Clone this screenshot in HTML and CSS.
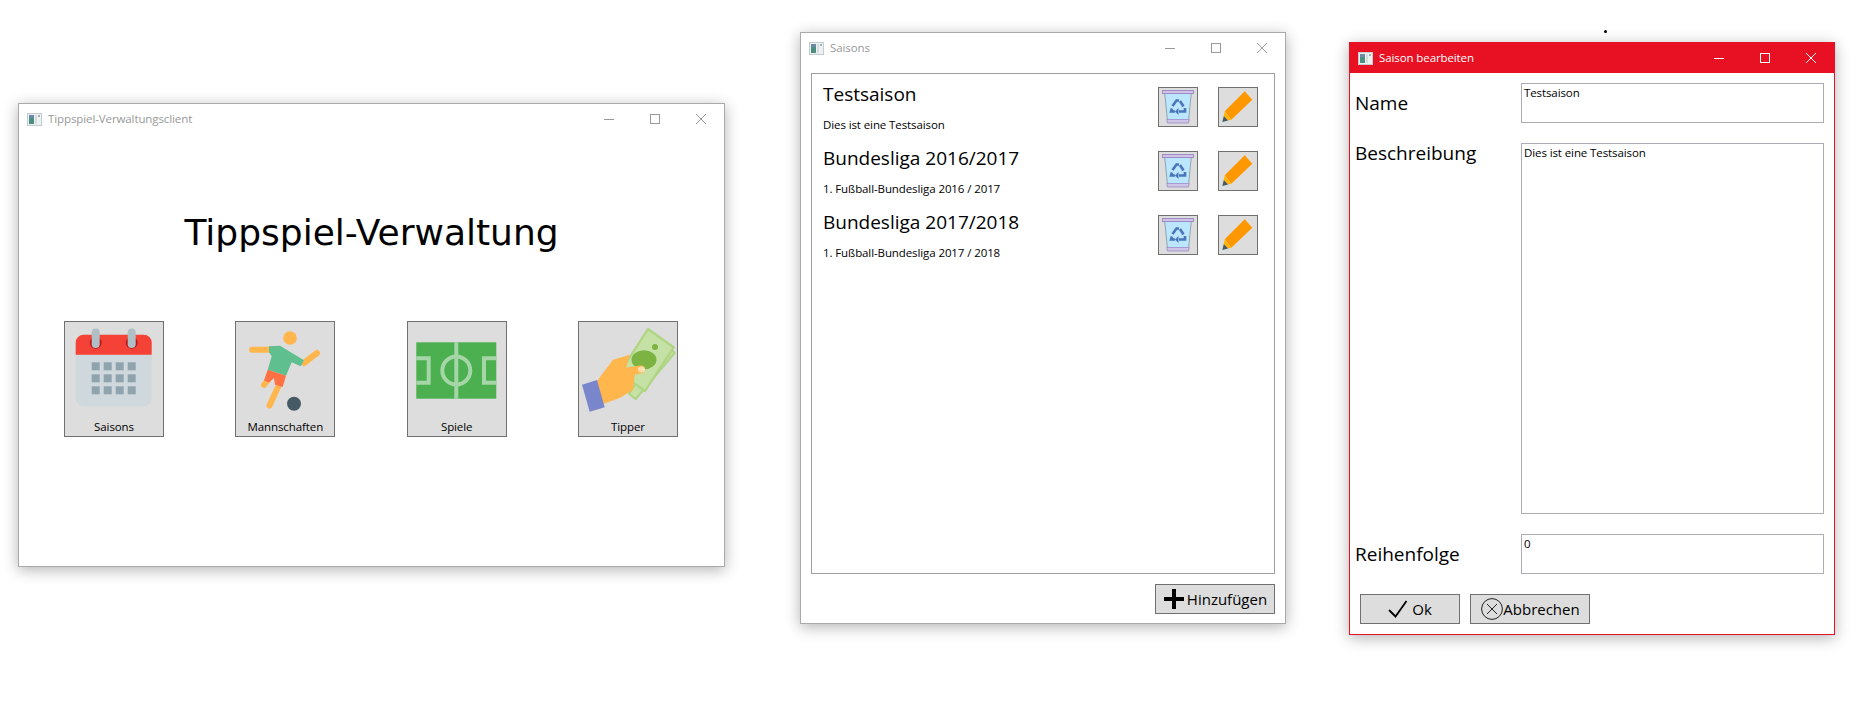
FILE: index.html
```html
<!DOCTYPE html>
<html>
<head>
    <title>Tippspiel-Verwaltung</title>
    <link rel="stylesheet" href="styles.css">
</head>
<body>
    <svg width="0" height="0" class="defs">
        <defs>
            <symbol id="app" viewBox="0 0 15 13">
                <rect x="0.5" y="0.5" width="14" height="12" fill="#eef1f2" stroke="#c3cbcf"/>
                <rect x="2" y="2" width="5" height="9" fill="#4a8f82"/>
                <rect x="2" y="2" width="5" height="3" fill="#6c8aa8"/>
                <rect x="8" y="2" width="2" height="9" fill="#d5dde0"/>
                <rect x="11" y="2" width="2" height="2" fill="#9fb0b8"/>
            </symbol>
            <symbol id="trash" viewBox="0 0 38 38">
                <path d="M5.7 5 L32.3 5 L29.5 33 L8.5 33 Z" fill="#bbe6fd" stroke="#90a4ae"/>
                <rect x="3.5" y="2.5" width="31" height="3" fill="#d1c4e9" stroke="#9f8ac4"/>
                <path d="M7.8 31.5 H30.2 L29.5 35 H8.5 Z" fill="#d1c4e9" stroke="#9f8ac4" stroke-width="0.8"/>
                <g fill="none" stroke="#4a76b8" stroke-width="2.6">
                    <path d="M13.5 18 L17.5 12.5 L20 12.5"/>
                    <path d="M21 13 L24.5 18.5"/>
                    <path d="M26 20 L26 23.5 L20 23.5"/>
                    <path d="M16 23.5 L12 23.5 L13 20.5"/>
                </g>
                <path d="M19.5 20 V27 L16 23.5 Z" fill="#4a76b8"/>
            </symbol>
            <symbol id="pencil" viewBox="0 0 38 38">
                <path d="M25.7 3.3 L33.3 11.7 L12.3 31.7 L5.7 23.3 Z" fill="#ff9800"/>
                <path d="M5.7 23.3 L12.3 31.7 L9 32.5 L4.8 28 Z" fill="#ffb300"/>
                <path d="M3.3 34 L4.8 28 L9 32.5 Z" fill="#455a64"/>
            </symbol>
        </defs>
    </svg>

    <div class="window window-main">
        <div class="titlebar">
            <svg class="app-icon"><use href="#app"/></svg>
            <span class="title">Tippspiel-Verwaltungsclient</span>
            <div class="controls">
                <svg class="ctl" viewBox="0 0 46 30"><path d="M18 15.5 H28"/></svg>
                <svg class="ctl" viewBox="0 0 46 30"><rect x="18.5" y="10.5" width="9" height="9"/></svg>
                <svg class="ctl" viewBox="0 0 46 30"><path d="M18 10 L28 20 M28 10 L18 20"/></svg>
            </div>
        </div>
        <h1 class="main-heading">Tippspiel-Verwaltung</h1>
        <div class="tiles">
            <div class="tile">
                <svg class="tile-icon" viewBox="0 0 98 96">
                    <rect x="10.7" y="12.7" width="76" height="71.6" rx="8" fill="#cfd8dc"/>
                    <path d="M10.7 32.7 V20.7 a8 8 0 0 1 8 -8 H78.7 a8 8 0 0 1 8 8 V32.7 Z" fill="#f44336"/>
                    <circle cx="30.7" cy="20.7" r="6" fill="#b71c1c"/>
                    <circle cx="66.7" cy="20.7" r="6" fill="#b71c1c"/>
                    <rect x="26.7" y="6.5" width="8" height="19.5" rx="4" fill="#b0bec5"/>
                    <rect x="62.7" y="6.5" width="8" height="19.5" rx="4" fill="#b0bec5"/>
                    <g fill="#90a4ae">
                        <rect x="26.7" y="40.3" width="8" height="8"/><rect x="38.7" y="40.3" width="8" height="8"/><rect x="50.7" y="40.3" width="8" height="8"/><rect x="62.7" y="40.3" width="8" height="8"/>
                        <rect x="26.7" y="52.3" width="8" height="8"/><rect x="38.7" y="52.3" width="8" height="8"/><rect x="50.7" y="52.3" width="8" height="8"/><rect x="62.7" y="52.3" width="8" height="8"/>
                        <rect x="26.7" y="64.3" width="8" height="8"/><rect x="38.7" y="64.3" width="8" height="8"/><rect x="50.7" y="64.3" width="8" height="8"/><rect x="62.7" y="64.3" width="8" height="8"/>
                    </g>
                </svg>
                <span class="tile-label">Saisons</span>
            </div>
            <div class="tile">
                <svg class="tile-icon" viewBox="0 0 98 96">
                    <circle cx="54" cy="16" r="6.8" fill="#ffb74d"/>
                    <g fill="none" stroke="#ffb74d" stroke-width="6" stroke-linecap="round">
                        <path d="M16 27.7 H33"/>
                        <path d="M68 41 L81 31"/>
                        <path d="M42.5 64 L33.5 83.5"/>
                        <path d="M32 58 L28 63"/>
                    </g>
                    <path d="M33 24.3 L44 23.7 L68 38.3 L64.7 44.3 L55.7 40.3 L50 53.7 L31.7 47.7 L35.7 34.3 L33 30.3 Z" fill="#5fbf8f"/>
                    <path d="M31.7 47.7 L50 53.7 L46.7 65 L39 62.7 L38 56 L33 60.5 L28 58.5 Z" fill="#ff7043"/>
                    <circle cx="58" cy="81.7" r="7" fill="#455a64"/>
                </svg>
                <span class="tile-label">Mannschaften</span>
            </div>
            <div class="tile">
                <svg class="tile-icon" viewBox="0 0 98 96">
                    <rect x="8.3" y="20.3" width="80" height="56.4" fill="#4caf50"/>
                    <g fill="none" stroke="#a5d6a7" stroke-width="4">
                        <path d="M48.3 20.3 V76.7"/>
                        <circle cx="48.3" cy="48.5" r="14"/>
                        <path d="M8.3 36.3 H20.7 V60.7 H8.3"/>
                        <path d="M88.3 36.3 H76 V60.7 H88.3"/>
                    </g>
                </svg>
                <span class="tile-label">Spiele</span>
            </div>
            <div class="tile">
                <svg class="tile-icon" viewBox="0 0 98 96">
                    <path d="M50 71.7 L85 20 L95.7 31 L56.7 77 Z" fill="#c5e1a5" stroke="#aed581" stroke-width="2"/>
                    <path d="M69 7 L94.7 25.3 L66 69 L40.7 51 Z" fill="#c5e1a5" stroke="#aed581" stroke-width="2.2"/>
                    <ellipse cx="65" cy="37.7" rx="12.5" ry="9.5" fill="#7cb342"/>
                    <circle cx="76" cy="25" r="3" fill="#7cb342"/>
                    <path d="M18 59 L24 82 L40.7 76 L54 68 L56 50 L46 51 L50.7 32.7 L34 37.7 Z" fill="#ffb74d"/>
                    <path d="M45 50 L62 47.5" fill="none" stroke="#ffb74d" stroke-width="8" stroke-linecap="round"/>
                    <ellipse cx="62.5" cy="47.5" rx="3.5" ry="3" fill="#ffe0b2"/>
                    <path d="M3 62.7 L18 58 L25.7 85.3 L10.7 89.7 Z" fill="#7986cb"/>
                </svg>
                <span class="tile-label">Tipper</span>
            </div>
        </div>
    </div>

    <div class="window window-list">
        <div class="titlebar">
            <svg class="app-icon"><use href="#app"/></svg>
            <span class="title">Saisons</span>
            <div class="controls">
                <svg class="ctl" viewBox="0 0 46 30"><path d="M18 15.5 H28"/></svg>
                <svg class="ctl" viewBox="0 0 46 30"><rect x="18.5" y="10.5" width="9" height="9"/></svg>
                <svg class="ctl" viewBox="0 0 46 30"><path d="M18 10 L28 20 M28 10 L18 20"/></svg>
            </div>
        </div>
        <div class="list-body">
            <div class="season-list">
                <div class="season">
                    <div class="season-text">
                        <div class="season-name">Testsaison</div>
                        <div class="season-desc">Dies ist eine Testsaison</div>
                    </div>
                    <button class="icon-btn"><svg><use href="#trash"/></svg></button>
                    <button class="icon-btn"><svg><use href="#pencil"/></svg></button>
                </div>
                <div class="season">
                    <div class="season-text">
                        <div class="season-name">Bundesliga 2016/2017</div>
                        <div class="season-desc">1. Fußball-Bundesliga 2016 / 2017</div>
                    </div>
                    <button class="icon-btn"><svg><use href="#trash"/></svg></button>
                    <button class="icon-btn"><svg><use href="#pencil"/></svg></button>
                </div>
                <div class="season">
                    <div class="season-text">
                        <div class="season-name">Bundesliga 2017/2018</div>
                        <div class="season-desc">1. Fußball-Bundesliga 2017 / 2018</div>
                    </div>
                    <button class="icon-btn"><svg><use href="#trash"/></svg></button>
                    <button class="icon-btn"><svg><use href="#pencil"/></svg></button>
                </div>
            </div>
            <div class="list-footer">
                <button class="text-btn add-btn">
                    <svg width="20" height="20" viewBox="0 0 20 20"><path d="M0 8 H8 V0 H12 V8 H20 V12 H12 V20 H8 V12 H0 Z" fill="#000"/></svg>
                    Hinzufügen
                </button>
            </div>
        </div>
    </div>

    <div class="window window-edit">
        <div class="titlebar">
            <svg class="app-icon"><use href="#app"/></svg>
            <span class="title">Saison bearbeiten</span>
            <div class="controls">
                <svg class="ctl" viewBox="0 0 46 30"><path d="M18 15.5 H28"/></svg>
                <svg class="ctl" viewBox="0 0 46 30"><rect x="18.5" y="10.5" width="9" height="9"/></svg>
                <svg class="ctl" viewBox="0 0 46 30"><path d="M18 10 L28 20 M28 10 L18 20"/></svg>
            </div>
        </div>
        <div class="edit-body">
            <div class="form-row">
                <label class="form-label">Name</label>
                <div class="field field-small">Testsaison</div>
            </div>
            <div class="form-row form-row-top">
                <label class="form-label">Beschreibung</label>
                <div class="field field-large">Dies ist eine Testsaison</div>
            </div>
            <div class="form-row">
                <label class="form-label">Reihenfolge</label>
                <div class="field field-small">0</div>
            </div>
            <div class="form-buttons">
                <button class="text-btn ok-btn">
                    <svg width="20" height="20" viewBox="0 0 20 20"><path d="M1 11 L7.5 17.5 L18.5 2" fill="none" stroke="#000" stroke-width="1.8"/></svg>
                    Ok
                </button>
                <button class="text-btn cancel-btn">
                    <svg width="22" height="22" viewBox="0 0 22 22"><circle cx="11" cy="11" r="10.4" fill="none" stroke="#222" stroke-width="1"/><path d="M6 6 L16 16 M16 6 L6 16" stroke="#222" stroke-width="1"/></svg>
                    Abbrechen
                </button>
            </div>
        </div>
    </div>

    <div class="cursor-dot"></div>
</body>
</html>
```

FILE: styles.css
```css
body {
    margin: 0;
    width: 1876px;
    height: 723px;
    overflow: hidden;
    background: #fff;
    font-family: "Open Sans", "Noto Sans", sans-serif;
    color: #000;
}
.defs {
    position: absolute;
}
.window {
    position: absolute;
    box-sizing: border-box;
    display: flex;
    flex-direction: column;
    background: #fff;
    border: 1px solid #aaa;
    box-shadow: 0 3px 14px rgba(0, 0, 0, 0.3);
}
.window-main {
    left: 18px;
    top: 103px;
    width: 707px;
    height: 464px;
}
.window-list {
    left: 800px;
    top: 32px;
    width: 486px;
    height: 592px;
}
.window-edit {
    left: 1349px;
    top: 42px;
    width: 486px;
    height: 593px;
    border-color: #e81123;
}
.titlebar {
    display: flex;
    align-items: center;
    height: 30px;
    flex-shrink: 0;
    color: #999;
    font-size: 11.5px;
    letter-spacing: -0.1px;
}
.app-icon {
    width: 15px;
    height: 13px;
    margin: 0 6px 0 8px;
}
.title {
    flex: 1;
    margin-top: -2px;
}
.controls {
    display: flex;
}
.ctl {
    width: 46px;
    height: 30px;
    fill: none;
    stroke: #999;
    stroke-width: 1;
}
.window-edit .titlebar {
    background: #e81123;
    color: #fff;
}
.window-edit .ctl {
    stroke: #fff;
}

.main-heading {
    margin: 75px 0 0;
    text-align: center;
    font-family: "DejaVu Sans", sans-serif;
    font-size: 36px;
    line-height: 48px;
    font-weight: normal;
}
.tiles {
    display: flex;
    justify-content: space-between;
    margin-top: 64px;
    padding: 0 46px 0 45px;
}
.tile {
    box-sizing: border-box;
    width: 100px;
    height: 116px;
    display: flex;
    flex-direction: column;
    align-items: center;
    background: #ddd;
    border: 1px solid #707070;
}
.tile-icon {
    width: 98px;
    height: 96px;
}
.tile-label {
    font-size: 11.5px;
    letter-spacing: -0.1px;
    line-height: 18px;
}

.list-body {
    flex: 1;
    display: flex;
    flex-direction: column;
    padding: 10px 10px 9px;
}
.season-list {
    flex: 1;
    box-sizing: border-box;
    padding: 8px 16px 0 11px;
    border: 1px solid #a0a0a0;
}
.season {
    display: flex;
    height: 64px;
    gap: 20px;
    padding-top: 5px;
    box-sizing: border-box;
}
.season-text {
    flex: 1;
    margin-top: -6px;
}
.season-name {
    font-size: 19px;
    line-height: 27px;
}
.season-desc {
    margin-top: 9px;
    font-size: 11.5px;
    letter-spacing: -0.1px;
    line-height: 16px;
}
.icon-btn {
    width: 40px;
    height: 40px;
    padding: 0;
    background: #ddd;
    border: 1px solid #707070;
}
.icon-btn svg {
    display: block;
    width: 38px;
    height: 38px;
}
.list-footer {
    display: flex;
    justify-content: flex-end;
    margin-top: 10px;
}
.text-btn {
    box-sizing: border-box;
    display: flex;
    align-items: center;
    justify-content: center;
    height: 30px;
    padding: 0;
    background: #ddd;
    border: 1px solid #707070;
    font-family: inherit;
    font-size: 15px;
    color: #000;
}
.add-btn {
    width: 120px;
    gap: 3px;
    padding-left: 1px;
}

.edit-body {
    flex: 1;
    padding: 10px 10px 0 5px;
}
.form-row {
    display: flex;
    align-items: center;
    margin-bottom: 20px;
}
.form-row-top {
    align-items: flex-start;
}
.form-label {
    width: 166px;
    font-size: 19px;
    line-height: 27px;
}
.form-row-top .form-label {
    margin-top: -3px;
}
.field {
    flex: 1;
    box-sizing: border-box;
    padding: 1px 2px;
    border: 1px solid #abadb3;
    font-size: 11.5px;
    letter-spacing: -0.1px;
    line-height: 16px;
}
.field-small {
    height: 40px;
}
.field-large {
    height: 371px;
}
.form-buttons {
    display: flex;
    gap: 10px;
    padding-left: 5px;
}
.ok-btn {
    width: 100px;
    gap: 4px;
}
.cancel-btn {
    width: 120px;
    padding-left: 1px;
}

.cursor-dot {
    position: absolute;
    left: 1604px;
    top: 30px;
    width: 3px;
    height: 3px;
    background: #000;
    border-radius: 50%;
}
```
